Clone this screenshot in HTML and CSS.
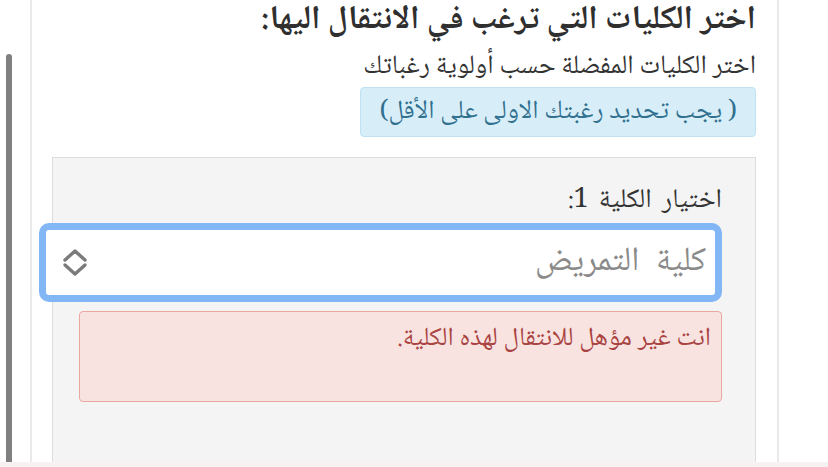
FILE: index.html
```html
<!DOCTYPE html>
<html lang="ar">
<head>
<meta charset="utf-8">
<title>اختيار الكليات</title>
<link rel="stylesheet" href="styles.css">
</head>
<body>
<div class="viewport">
  <div class="scroll-thumb"></div>
  <div class="card" dir="rtl">
    <h3 class="title">اختر الكليات التي ترغب في الانتقال اليها:</h3>
    <p class="subtitle">اختر الكليات المفضلة حسب أولوية رغباتك</p>
    <div class="info-row">
      <div class="info">( يجب تحديد رغبتك الاولى على الأقل)</div>
    </div>
    <div class="panel">
      <label class="field-label">اختيار الكلية 1:</label>
      <div class="select">
        <span class="select-value">كلية التمريض</span>
        <svg class="chevrons" width="28" height="30" viewBox="0 0 28 30" aria-hidden="true">
          <path d="M4 12 L14 3 L24 12" fill="none" stroke="#7b7b7b" stroke-width="3.4" stroke-linecap="round" stroke-linejoin="round"/>
          <path d="M4 17 L14 26 L24 17" fill="none" stroke="#7b7b7b" stroke-width="3.4" stroke-linecap="round" stroke-linejoin="round"/>
        </svg>
      </div>
      <div class="alert">انت غير مؤهل للانتقال لهذه الكلية.</div>
    </div>
  </div>
</div>
<div class="bottom-strip"></div>
</body>
</html>
```
FILE: styles.css
```css
html, body {
  margin: 0;
  padding: 0;
  background: #ffffff;
}
body {
  width: 828px;
  height: 467px;
  overflow: hidden;
  font-family: "Noto Naskh Arabic", "Noto Sans Arabic", "DejaVu Sans", "Noto Sans", sans-serif;
  color: #333333;
}
.viewport {
  position: relative;
  height: 462px;
  overflow: hidden;
  display: flex;
}
.scroll-thumb {
  position: absolute;
  left: 6px;
  top: 54px;
  bottom: 0;
  width: 6px;
  border-radius: 3px 3px 0 0;
  background: #808080;
}
.card {
  margin-left: 30px;
  border-left: 2px solid #e9e9e9;
  border-right: 2px solid #e9e9e9;
  background: #ffffff;
  padding: 0 21px 0 20px;
  box-sizing: content-box;
  width: 704px;
  display: flex;
  flex-direction: column;
}
.title {
  margin: 1px 0 0;
  font-size: 33px;
  line-height: 40px;
  font-weight: bold;
  color: #2f2f2f;
}
.subtitle {
  margin: 13px 0 0;
  font-size: 26.5px;
  line-height: 28px;
  color: #333333;
}
.info-row {
  display: flex;
  margin-top: 5px;
}
.info {
  width: 396px;
  height: 50px;
  box-sizing: border-box;
  display: flex;
  align-items: center;
  padding: 0 18px;
  background: #d7eef9;
  border: 1px solid #bfe3f3;
  border-radius: 4px;
  color: #31708f;
  font-size: 26px;
}
.panel {
  margin-top: 20px;
  flex: 1;
  background: #f4f4f4;
  border: 1px solid #dddddd;
  border-bottom: none;
  padding: 28px 33px 0 27px;
  display: flex;
  flex-direction: column;
}
.field-label {
  font-size: 27px;
  line-height: 30px;
  word-spacing: 4px;
  color: #333333;
}
.select {
  margin: 7px 0 0 -41px;
  height: 79px;
  box-sizing: border-box;
  border: 7px solid #82b6f4;
  border-radius: 10px;
  background: #ffffff;
  display: flex;
  align-items: center;
  justify-content: space-between;
  padding: 0 9px 0 15px;
}
.select-value {
  font-size: 34px;
  word-spacing: 9px;
  color: #8a8a8a;
}
.chevrons {
  display: block;
}
.alert {
  margin: 9px 0 0 -1px;
  height: 91px;
  box-sizing: border-box;
  background: #f8e3e1;
  border: 1px solid #e9a89f;
  border-radius: 4px;
  padding: 11px 10px 0;
  color: #a94442;
  font-size: 26px;
  line-height: 32px;
}
.bottom-strip {
  height: 5px;
  background: #f6f2f2;
}
```
